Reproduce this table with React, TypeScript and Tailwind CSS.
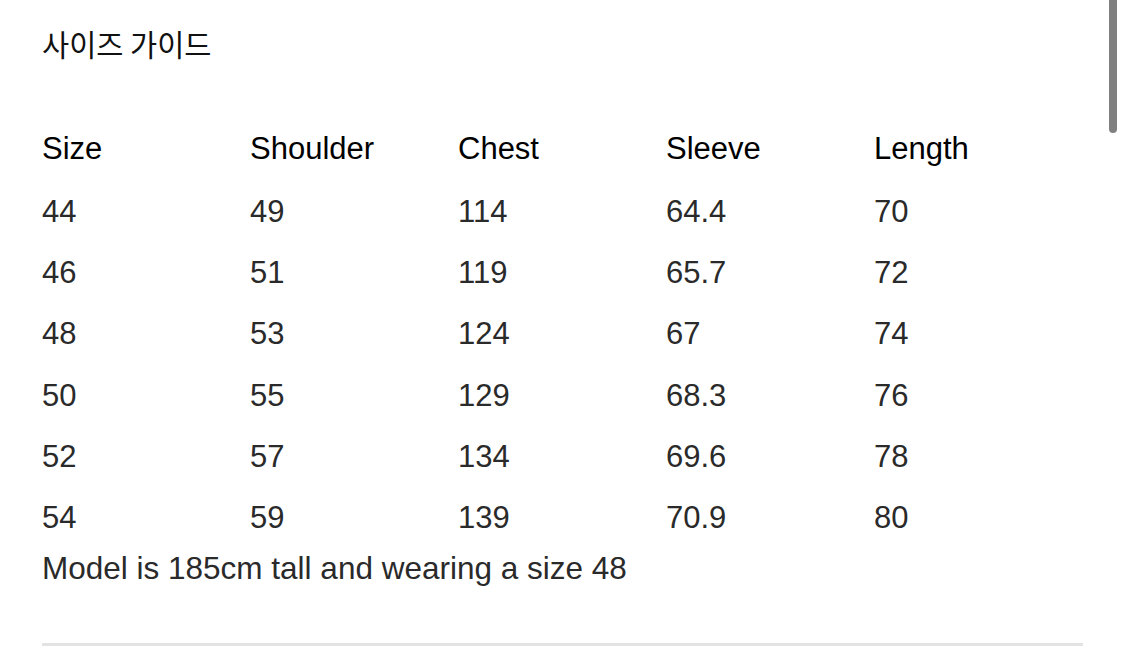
const columns = ["Size", "Shoulder", "Chest", "Sleeve", "Length"];

const rows = [
  ["44", "49", "114", "64.4", "70"],
  ["46", "51", "119", "65.7", "72"],
  ["48", "53", "124", "67", "74"],
  ["50", "55", "129", "68.3", "76"],
  ["52", "57", "134", "69.6", "78"],
  ["54", "59", "139", "70.9", "80"],
];

export default function App() {
  return (
    <div className="relative h-[660px] w-[1125px] overflow-hidden bg-white font-['Liberation_Sans',Arial,sans-serif]">
      {/* scroll indicator */}
      <div className="absolute right-[8px] top-[-10px] h-[143px] w-[8px] rounded-full bg-[#808080]" />

      <div className="pl-[42px] pr-[42px]">
        <h1 className="pt-[23px] font-['Noto_Sans_CJK_KR','Noto_Sans',sans-serif] text-[29.5px] font-normal leading-[40px] text-[#111]">
          사이즈 가이드
        </h1>

        <div className="mt-[55px] flex text-[31px] leading-[61px] text-black">
          {columns.map((c) => (
            <div key={c} className="w-[208px]">
              {c}
            </div>
          ))}
        </div>

        <div className="mt-[2px]">
          {rows.map((r) => (
            <div key={r[0]} className="flex text-[31px] leading-[61.2px] text-[#2a2a2a]">
              {r.map((v, i) => (
                <div key={i} className="w-[208px]">
                  {v}
                </div>
              ))}
            </div>
          ))}
        </div>

        <p className="text-[31.5px] leading-[40px] text-[#2a2a2a]">
          Model is 185cm tall and wearing a size 48
        </p>

        <div className="mt-[55px] h-[3px] w-[1041px] bg-[#e3e3e3]" />
      </div>
    </div>
  );
}
